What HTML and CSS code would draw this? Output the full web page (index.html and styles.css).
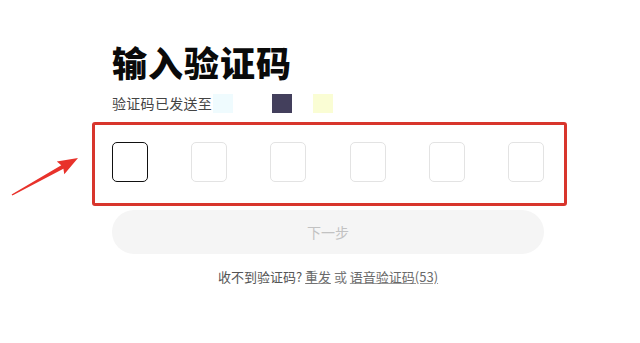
FILE: index.html
```html
<!DOCTYPE html>
<html lang="zh-CN">
<head>
<meta charset="utf-8">
<title>输入验证码</title>
<link rel="stylesheet" href="styles.css">
</head>
<body>
<svg class="arrow" width="90" height="50" viewBox="0 0 90 50">
  <path d="M11.6 44.5 L61.3 15.3 L56.8 11.5 L78 8 L64.3 24.3 L63.4 18.7 L12.4 45.5 Z" fill="#e8322b"/>
</svg>
<main class="page">
  <h1 class="title">输入验证码</h1>
  <div class="sub">
    <span class="sub-text">验证码已发送至</span>
    <span class="chip chip-cyan"></span>
    <span class="chip chip-dark"></span>
    <span class="chip chip-yellow"></span>
  </div>
  <div class="code-frame">
    <div class="code-row">
      <div class="code-box active"></div>
      <div class="code-box"></div>
      <div class="code-box"></div>
      <div class="code-box"></div>
      <div class="code-box"></div>
      <div class="code-box"></div>
    </div>
  </div>
  <button class="next" type="button">下一步</button>
  <p class="resend">收不到验证码? <a class="link">重发</a> <span class="or">或</span> <a class="link">语音验证码(53)</a></p>
</main>
</body>
</html>
```

FILE: styles.css
```css
html, body {
  margin: 0;
  padding: 0;
  background: #ffffff;
}
body {
  font-family: "Noto Sans CJK SC", "Noto Sans", sans-serif;
  color: #333;
  position: relative;
  width: 640px;
  height: 343px;
  overflow: hidden;
}
.arrow {
  position: absolute;
  left: 0;
  top: 150px;
}
.page {
  width: 432px;
  margin-left: 112px;
  padding-top: 41px;
}
.title {
  margin: 0;
  font-size: 35px;
  line-height: 42px;
  font-weight: 900;
  color: #0a0a0a;
  letter-spacing: 1px;
}
.sub {
  display: flex;
  align-items: center;
  margin-top: 10px;
  height: 20px;
}
.sub-text {
  font-size: 14px;
  line-height: 20px;
  color: #444;
  letter-spacing: 0.3px;
}
.chip {
  display: block;
  width: 20px;
  height: 19px;
}
.chip-cyan {
  background: #effbfe;
  margin-left: 1px;
}
.chip-dark {
  background: #433f5c;
  margin-left: 39px;
}
.chip-yellow {
  background: #fafdd4;
  margin-left: 21px;
}
.code-frame {
  margin: 9px -23px 0 -20px;
  border: 3px solid #d8352c;
  border-radius: 3px;
  padding: 17px 20px 21px 17px;
}
.code-row {
  display: flex;
  justify-content: space-between;
}
.code-box {
  width: 36px;
  height: 40px;
  box-sizing: border-box;
  border: 1px solid #e3e3e3;
  border-radius: 5px;
  background: #fff;
}
.code-box.active {
  border-color: #111;
}
.next {
  display: block;
  width: 432px;
  height: 44px;
  margin-top: 4px;
  border: none;
  border-radius: 22px;
  background: #f5f5f5;
  color: #c2c2c2;
  font-family: inherit;
  font-size: 14px;
  padding: 0;
}
.resend {
  margin: 14px 0 0;
  text-align: center;
  font-size: 13px;
  line-height: 18px;
  color: #555;
}
.link {
  color: #6a6a6a;
  text-decoration: underline;
  text-decoration-color: #999;
}
.or {
  color: #777;
}
```
